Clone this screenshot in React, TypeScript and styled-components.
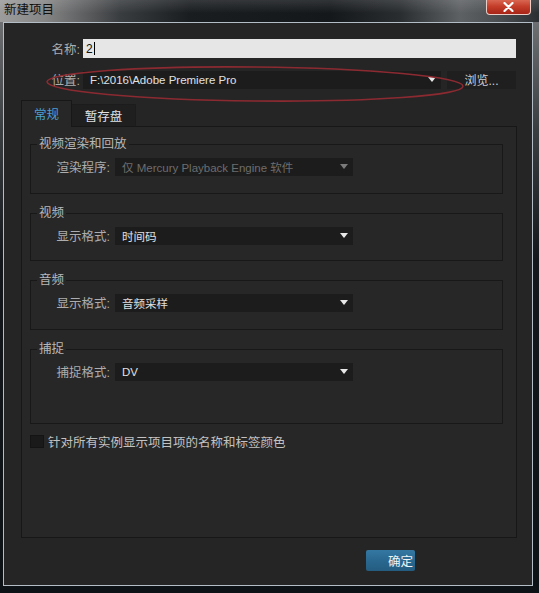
import React from 'react'
import styled, { createGlobalStyle } from 'styled-components'

const GlobalStyle = createGlobalStyle`
  html, body {
    margin: 0;
    padding: 0;
    background: #0e1217;
  }
  body {
    font-family: "Liberation Sans", "Noto Sans CJK SC", sans-serif;
  }
  * {
    box-sizing: border-box;
  }
`

const Window = styled.div`
  position: relative;
  width: 539px;
  height: 593px;
  display: flex;
  flex-direction: column;
  overflow: hidden;
  background: linear-gradient(180deg, #77797b 0, #3b3e41 130px, #14181c 260px, #0d1217 100%);
`

const TitleBar = styled.div`
  flex: none;
  height: 22px;
  display: flex;
  align-items: flex-start;
  justify-content: space-between;
  padding: 0 8px 0 4px;
  background:
    linear-gradient(180deg, rgba(255, 255, 255, 0.12), rgba(0, 0, 0, 0) 60%),
    linear-gradient(90deg, #9c9c9c 0, #858585 45px, #3a3d40 120px, #1a1d20 190px, #15181b 330px, #2a2d30 400px, #5e6164 460px, #4a4d50 500px, #2b2e32 539px);
`

const Title = styled.span`
  font-size: 12.5px;
  line-height: 16px;
  margin-top: 1px;
  color: #101010;
  font-family: "Noto Sans CJK SC", sans-serif;
`

const CloseButton = styled.div`
  width: 45px;
  height: 16px;
  margin-top: -1px;
  display: flex;
  align-items: center;
  justify-content: center;
  border: 1px solid #e9cdc6;
  border-top: none;
  border-radius: 0 0 4px 4px;
  background: linear-gradient(180deg, #dc6d58 0, #c43d2a 50%, #a82416 100%);
`

const Client = styled.div`
  flex: 1;
  display: flex;
  flex-direction: column;
  margin: 0 6px 7px 3px;
  padding: 16px 16px 0 0;
  border: 1px solid #b3bdc5;
  background: #252525;
`

const FieldRow = styled.div`
  display: flex;
  align-items: center;
  gap: 6px;
  & + & {
    margin-top: 12px;
  }
`

const FieldLabel = styled.span`
  width: 77px;
  margin-right: -4px;
  padding-right: 1px;
  text-align: right;
  font-size: 12.5px;
  color: #adadad;
`

const TextBox = styled.div`
  flex: 1;
  height: 19px;
  display: flex;
  align-items: center;
  padding-left: 3px;
  background: #e6e6e6;
  color: #111;
  font-size: 12px;
`

const Caret = styled.span`
  width: 1px;
  height: 13px;
  margin-left: 1px;
  background: #000;
`

const Select = styled.div<{ $width?: number; $disabled?: boolean }>`
  ${p => (p.$width ? `width: ${p.$width}px;` : 'flex: 1;')}
  height: 18px;
  display: flex;
  align-items: center;
  justify-content: space-between;
  padding: 0 5px 0 7px;
  background: #1c1c1c;
  color: ${p => (p.$disabled ? '#6d6d6d' : '#e0e0e0')};
  font-size: 11.5px;
  white-space: nowrap;
`

const Arrow = styled.span<{ $disabled?: boolean }>`
  width: 0;
  height: 0;
  border-left: 4px solid transparent;
  border-right: 4px solid transparent;
  border-top: 5px solid ${p => (p.$disabled ? '#7a7a7a' : '#e8e8e8')};
`

const BrowseButton = styled.div`
  width: 69px;
  height: 18px;
  display: flex;
  align-items: center;
  justify-content: center;
  background: #1f1f1f;
  color: #d0d0d0;
  font-size: 12px;
`

const TabBar = styled.div`
  position: relative;
  z-index: 1;
  display: flex;
  align-items: flex-end;
  height: 26px;
  margin: 12px 0 -1px 17px;
`

const Tab = styled.div<{ $active?: boolean }>`
  display: flex;
  align-items: center;
  justify-content: center;
  width: ${p => (p.$active ? 51 : 64)}px;
  height: ${p => (p.$active ? 27 : 23)}px;
  padding-bottom: ${p => (p.$active ? 1 : 0)}px;
  border: 1px solid ${p => (p.$active ? '#171717' : '#1c1c1c')};
  border-bottom: ${p => (p.$active ? 'none' : '1px solid #171717')};
  border-left: ${p => (p.$active ? '1px solid #171717' : 'none')};
  background: ${p => (p.$active ? '#272727' : '#1f1f1f')};
  color: ${p => (p.$active ? '#4c9fd0' : '#e2e2e2')};
  font-size: 12.5px;
`

const TabPanel = styled.div`
  height: 412px;
  margin: 0 -1px 0 17px;
  padding: 10px 13px 0 8px;
  border: 1px solid #171717;
  background: #272727;
`

const Group = styled.fieldset<{ $bottom: number }>`
  margin: 0;
  min-inline-size: 0;
  padding: 6px 0 ${p => p.$bottom}px 0;
  border: 1px solid #181818;
  & + & {
    margin-top: 12px;
  }
`

const Legend = styled.legend`
  margin-left: 6px;
  padding: 0 2px;
  font-size: 12.5px;
  line-height: 14px;
  color: #b8b8b8;
`

const GroupRow = styled.div`
  display: grid;
  grid-template-columns: 79px 238px;
  column-gap: 5px;
  align-items: center;
`

const RowLabel = styled.span`
  text-align: right;
  font-size: 12.5px;
  color: #adadad;
  white-space: nowrap;
`

const CheckRow = styled.label`
  display: flex;
  align-items: center;
  gap: 4px;
  margin-top: 8px;
  font-size: 12.5px;
  color: #c2c2c2;
`

const CheckBox = styled.span`
  width: 14px;
  height: 13px;
  background: #1a1a1a;
  border: 1px solid #141414;
`

const Footer = styled.div`
  display: flex;
  justify-content: flex-end;
  margin: 12px 101px 0 0;
`

const OkButton = styled.div`
  width: 49px;
  height: 21px;
  display: flex;
  align-items: center;
  justify-content: flex-end;
  padding-right: 2px;
  border-radius: 2px;
  background: linear-gradient(180deg, #3478a2 0, #2a6890 50%, #245c80 100%);
  color: #eef4f8;
  font-size: 12.5px;
`

const Markup = styled.svg`
  position: absolute;
  left: 0;
  top: 0;
  pointer-events: none;
`

const groups = [
  { title: '视频渲染和回放', label: '渲染程序:', value: '仅 Mercury Playback Engine 软件', disabled: true, bottom: 17 },
  { title: '视频', label: '显示格式:', value: '时间码', bottom: 15 },
  { title: '音频', label: '显示格式:', value: '音频采样', bottom: 17 },
  { title: '捕捉', label: '捕捉格式:', value: 'DV', bottom: 42 },
]

export default function App() {
  return (
    <>
      <GlobalStyle />
      <Window>
        <TitleBar>
          <Title>新建项目</Title>
          <CloseButton>
            <svg width="11" height="10" viewBox="0 0 11 10">
              <path d="M1.5 1 L9.5 9 M9.5 1 L1.5 9" stroke="#fff" strokeWidth="2.2" strokeLinecap="round" />
            </svg>
          </CloseButton>
        </TitleBar>
        <Client>
          <FieldRow>
            <FieldLabel>名称:</FieldLabel>
            <TextBox>
              2<Caret />
            </TextBox>
          </FieldRow>
          <FieldRow>
            <FieldLabel>位置:</FieldLabel>
            <Select>
              <span>F:\2016\Adobe Premiere Pro</span>
              <Arrow />
            </Select>
            <BrowseButton>浏览...</BrowseButton>
          </FieldRow>

          <TabBar>
            <Tab $active>常规</Tab>
            <Tab>暂存盘</Tab>
          </TabBar>
          <TabPanel>
            {groups.map(g => (
              <Group key={g.title} $bottom={g.bottom}>
                <Legend>{g.title}</Legend>
                <GroupRow>
                  <RowLabel>{g.label}</RowLabel>
                  <Select $width={238} $disabled={g.disabled}>
                    <span>{g.value}</span>
                    <Arrow $disabled={g.disabled} />
                  </Select>
                </GroupRow>
              </Group>
            ))}
            <CheckRow>
              <CheckBox />
              针对所有实例显示项目项的名称和标签颜色
            </CheckRow>
          </TabPanel>

          <Footer>
            <OkButton>确定</OkButton>
          </Footer>
        </Client>

        <Markup width="539" height="593" viewBox="0 0 539 593">
          <ellipse
            cx="255"
            cy="84"
            rx="208"
            ry="17"
            transform="rotate(0.6 255 84)"
            fill="none"
            stroke="#8c2a31"
            strokeWidth="1.6"
          />
        </Markup>
      </Window>
    </>
  )
}
